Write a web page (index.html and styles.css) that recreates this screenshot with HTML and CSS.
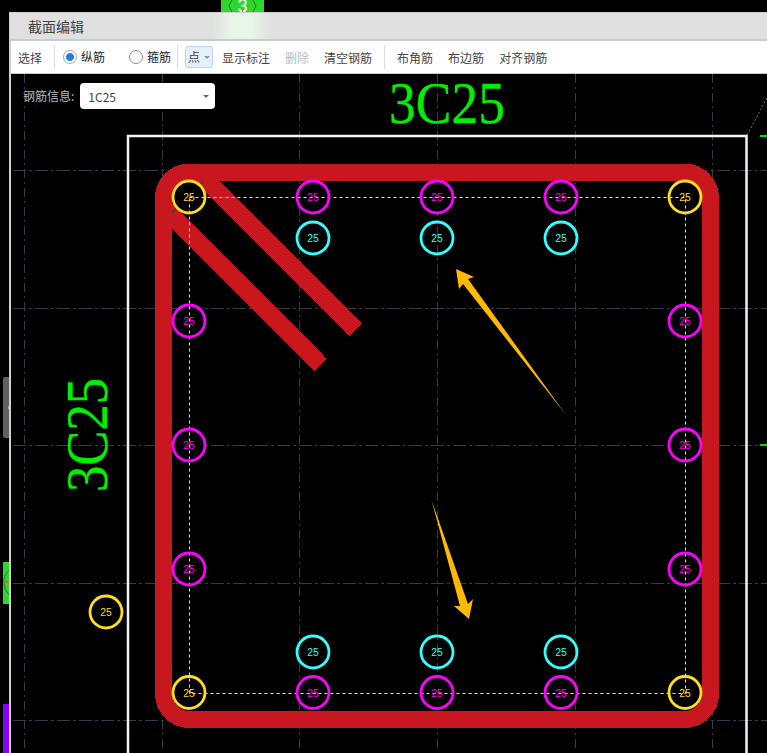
FILE: index.html
```html
<!DOCTYPE html>
<html lang="zh">
<head>
<meta charset="utf-8">
<title>截面编辑</title>
<link rel="stylesheet" href="styles.css">
</head>
<body>
<div class="bg-tab bg-tab-top">
  <svg class="tab-arcs" viewBox="0 0 43 12" width="43" height="12" xmlns="http://www.w3.org/2000/svg">
    <path d="M11 0 L8 6 L11 12 M32 0 L35 6 L32 12"/>
  </svg>
  <span class="tab-num">3</span>
  <span class="tab-mark"></span>
</div>
<div class="bg-tab bg-tab-gray"><span class="gray-dot"></span></div>
<div class="bg-tab bg-tab-green">
  <svg class="tab-arcs" viewBox="0 0 6 42" width="6" height="42" xmlns="http://www.w3.org/2000/svg">
    <path d="M6 8 Q0 14 1 21 Q1 28 6 33"/>
  </svg>
  <span class="green-mark"></span>
</div>
<div class="bg-tab bg-tab-purple"></div>
<main class="window">
  <header class="title-bar">截面编辑</header>
  <nav class="toolbar">
    <span class="tool tool-first">选择</span>
    <span class="sep"></span>
    <label class="radio-item radio-a"><span class="radio radio-on"></span>纵筋</label>
    <label class="radio-item radio-b"><span class="radio"></span>箍筋</label>
    <span class="sep sep-b"></span>
    <span class="drop-btn">点<span class="caret"></span></span>
    <span class="tool">显示标注</span>
    <span class="tool tool-off">删除</span>
    <span class="tool">清空钢筋</span>
    <span class="sep sep-c"></span>
    <span class="tool">布角筋</span>
    <span class="tool">布边筋</span>
    <span class="tool">对齐钢筋</span>
  </nav>
  <section class="canvas">
    <svg class="drawing" viewBox="11 74 756 679" width="756" height="679" xmlns="http://www.w3.org/2000/svg">
      <g class="grid-v">
        <line x1="24.5" y1="74" x2="24.5" y2="749"/>
        <line x1="162.5" y1="74" x2="162.5" y2="749"/>
        <line x1="299.5" y1="74" x2="299.5" y2="749"/>
        <line x1="437.5" y1="74" x2="437.5" y2="749"/>
        <line x1="575.5" y1="74" x2="575.5" y2="749"/>
        <line x1="712.5" y1="74" x2="712.5" y2="749"/>
      </g>
      <g class="grid-h">
        <line x1="13" y1="170.5" x2="767" y2="170.5"/>
        <line x1="13" y1="308.5" x2="767" y2="308.5"/>
        <line x1="13" y1="445.5" x2="767" y2="445.5"/>
        <line x1="13" y1="583.5" x2="767" y2="583.5"/>
        <line x1="13" y1="720.5" x2="767" y2="720.5"/>
      </g>
      <line class="guide" x1="747" y1="135" x2="767" y2="98"/>
      <rect class="column" x="128" y="136" width="618.5" height="640"/>
      <line class="tick" x1="760" y1="136" x2="767" y2="136"/>
      <line class="tick" x1="760" y1="445" x2="767" y2="445"/>
      <text class="label-green" x="389" y="123" textLength="116" lengthAdjust="spacingAndGlyphs">3C25</text>
      <text class="label-green" transform="translate(107 492) rotate(-90)" textLength="114" lengthAdjust="spacingAndGlyphs">3C25</text>
      <g class="bar">
        <rect x="163.5" y="172" width="547" height="547.5" rx="26"/>
        <line x1="197" y1="171" x2="356" y2="330"/>
        <line x1="163" y1="207" x2="321" y2="365"/>
      </g>
      <line class="slit" x1="204" y1="181" x2="172" y2="213"/>
      <g class="disc">
        <circle cx="189" cy="197" r="16"/>
        <circle cx="685" cy="197" r="16"/>
        <circle cx="189" cy="692.5" r="16"/>
        <circle cx="685" cy="692.5" r="16"/>
        <circle cx="313" cy="197" r="16"/>
        <circle cx="437" cy="197" r="16"/>
        <circle cx="561" cy="197" r="16"/>
        <circle cx="313" cy="692.5" r="16"/>
        <circle cx="437" cy="692.5" r="16"/>
        <circle cx="561" cy="692.5" r="16"/>
        <circle cx="189" cy="321" r="16"/>
        <circle cx="189" cy="445" r="16"/>
        <circle cx="189" cy="569" r="16"/>
        <circle cx="685" cy="321" r="16"/>
        <circle cx="685" cy="445" r="16"/>
        <circle cx="685" cy="569" r="16"/>
      </g>
      <rect class="dash-rect" x="189.5" y="197.5" width="496" height="496"/>
      <g class="ring ring-yellow">
        <circle cx="189" cy="197" r="16"/>
        <circle cx="685" cy="197" r="16"/>
        <circle cx="189" cy="692.5" r="16"/>
        <circle cx="685" cy="692.5" r="16"/>
        <circle cx="106" cy="612" r="16"/>
        <text x="189" y="201">25</text>
        <text x="685" y="201">25</text>
        <text x="189" y="696.5">25</text>
        <text x="685" y="696.5">25</text>
        <text x="106" y="616">25</text>
      </g>
      <g class="ring ring-magenta">
        <circle cx="313" cy="197" r="16"/>
        <circle cx="437" cy="197" r="16"/>
        <circle cx="561" cy="197" r="16"/>
        <circle cx="313" cy="692.5" r="16"/>
        <circle cx="437" cy="692.5" r="16"/>
        <circle cx="561" cy="692.5" r="16"/>
        <circle cx="189" cy="321" r="16"/>
        <circle cx="189" cy="445" r="16"/>
        <circle cx="189" cy="569" r="16"/>
        <circle cx="685" cy="321" r="16"/>
        <circle cx="685" cy="445" r="16"/>
        <circle cx="685" cy="569" r="16"/>
        <text x="313" y="201">25</text>
        <text x="437" y="201">25</text>
        <text x="561" y="201">25</text>
        <text x="313" y="696.5">25</text>
        <text x="437" y="696.5">25</text>
        <text x="561" y="696.5">25</text>
        <text x="189" y="325">25</text>
        <text x="189" y="449">25</text>
        <text x="189" y="573">25</text>
        <text x="685" y="325">25</text>
        <text x="685" y="449">25</text>
        <text x="685" y="573">25</text>
      </g>
      <g class="ring ring-cyan">
        <circle cx="313" cy="238" r="16"/>
        <circle cx="437" cy="238" r="16"/>
        <circle cx="561" cy="238" r="16"/>
        <circle cx="313" cy="652" r="16"/>
        <circle cx="437" cy="652" r="16"/>
        <circle cx="561" cy="652" r="16"/>
        <text x="313" y="242">25</text>
        <text x="437" y="242">25</text>
        <text x="561" y="242">25</text>
        <text x="313" y="656">25</text>
        <text x="437" y="656">25</text>
        <text x="561" y="656">25</text>
      </g>
      <polygon class="arrow" points="456,269 474,277 468,279 566,415 463,284 459,289"/>
      <polygon class="arrow" points="431.5,500 468,604 473,599 469,619 454,606 460,606"/>
    </svg>
    <div class="rebar-info">
      <span class="rebar-label">钢筋信息:</span>
      <span class="rebar-select">1C25<span class="caret caret-dark"></span></span>
    </div>
  </section>
</main>
</body>
</html>
```

FILE: styles.css
```css
* { box-sizing: border-box; }
html, body { margin: 0; height: 100%; }
body {
  background: #000;
  overflow: hidden;
  font-family: "Noto Sans CJK SC", "Liberation Sans", sans-serif;
  font-size: 12px;
  position: relative;
}
.bg-tab { position: absolute; overflow: hidden; }
.bg-tab-top {
  left: 221px; top: 0; width: 43px; height: 12px;
  background: #2ed62e;
}
.tab-arcs { position: absolute; left: 0; top: 0; display: block; }
.tab-arcs path { fill: none; stroke: #17803a; stroke-width: 1; }
.tab-num {
  position: absolute;
  left: 15px; top: -3px;
  width: 13px;
  text-align: center;
  font-family: "Liberation Sans", sans-serif;
  font-size: 18px;
  line-height: 18px;
  color: #fff;
}
.tab-mark { position: absolute; left: 21px; top: 10px; width: 1px; height: 2px; background: #e84a2a; }
.bg-tab-gray { left: 3px; top: 377px; width: 6px; height: 61px; background: #616161; border-radius: 2px 0 0 2px; }
.gray-dot { position: absolute; right: 0; top: 29px; width: 1px; height: 3px; background: #aaa; }
.bg-tab-green { left: 3px; top: 562px; width: 6px; height: 42px; background: #2ed62e; }
.green-mark { position: absolute; left: 0; top: 19px; width: 6px; height: 2px; background: #c9711e; }
.bg-tab-purple { left: 3px; top: 704px; width: 6px; height: 49px; background: #8a00ff; }

.window {
  position: absolute;
  left: 9px; top: 12px; right: 0; bottom: 0;
  display: flex;
  flex-direction: column;
  border-left: 2px solid #cfcfcf;
}
.title-bar {
  height: 29px;
  flex: none;
  margin-left: -1px;
  padding: 0 0 0 18px;
  border-top: 1px solid #cfcfcf;
  border-bottom: 2px solid #c8ccd0;
  background: linear-gradient(to right, #e0e0e0 203px, #e8f6e8 222px, #e8f6e8 240px, #e0e0e0 262px);
  font-size: 14px;
  line-height: 26px;
  color: #444;
}
.toolbar {
  height: 33px;
  flex: none;
  display: flex;
  align-items: center;
  background: #fff;
  border-bottom: 1px solid #c9c9c9;
  color: #444;
  line-height: 18px;
}
.tool { padding: 2px 0 0; margin-left: 15px; white-space: nowrap; }
.tool-first { margin-left: 7px; }
.tool-off { color: #bbb; }
.sep { width: 1px; height: 24px; background: #ddd; margin-left: 12px; }
.sep-b { margin-left: 6px; }
.sep-c { margin-left: 12px; }
.sep-c + .tool { margin-left: 12px; }
.radio-item { display: flex; align-items: center; gap: 4px; color: #222; }
.radio-a { margin-left: 8px; }
.radio-b { margin-left: 24px; }
.radio {
  width: 14px; height: 14px;
  border: 1px solid #8f8f8f;
  border-radius: 50%;
  background: #fff;
  display: block;
}
.radio-on {
  border-color: #9aa8ba;
  background: radial-gradient(circle, #2a7ae2 0 3.6px, #fff 4.2px);
}
.drop-btn {
  margin-left: 7px;
  width: 28px; height: 22px;
  border: 1px solid #bcd6f2;
  border-radius: 3px;
  background: #e6f0fb;
  display: flex;
  align-items: center;
  padding: 0 0 0 2px;
  color: #444;
}
.drop-btn + .tool { margin-left: 9px; }
.caret {
  margin-left: 4px;
  width: 0; height: 0;
  border-left: 3px solid transparent;
  border-right: 3px solid transparent;
  border-top: 3px solid #8f98a3;
}
.canvas { position: relative; flex: 1; min-height: 0; background: #000; }
.drawing { display: block; }
.grid-v line, .grid-h line { stroke: #343c48; stroke-width: 1; fill: none; }
.grid-v line { stroke-dasharray: 9 4 2 4; }
.grid-h line { stroke-dasharray: 13 3 3 3; }
.guide { stroke: #777; stroke-width: 1; stroke-dasharray: 2 2; }
.column { fill: none; stroke: #f2f2f2; stroke-width: 2.5; }
.tick { stroke: #00e000; stroke-width: 2; }
.label-green {
  font-family: "Liberation Serif", serif;
  font-size: 60px;
  fill: #00f000;
  stroke: #00f000;
  stroke-width: 0.4;
}
.bar { shape-rendering: crispEdges; }
.bar rect, .bar line { fill: none; stroke: #c8171f; stroke-width: 17; }
.slit { stroke: #000; stroke-width: 1; }
.disc circle { fill: #000; stroke: none; }
.dash-rect { fill: none; stroke: #d8e0ee; stroke-width: 1; stroke-dasharray: 3 3; }
.ring circle { fill: none; stroke-width: 2.8; }
.ring text {
  font-family: "Liberation Sans", sans-serif;
  font-size: 10.4px;
  text-anchor: middle;
}
.ring-yellow circle { stroke: #ffdd1e; }
.ring-yellow text { fill: #ffdd1e; }
.ring-magenta circle { stroke: #ff00ff; }
.ring-magenta text { fill: #ff00ff; }
.ring-cyan circle { stroke: #33ffff; }
.ring-cyan text { fill: #33ffff; }
.arrow { fill: #ffb900; }
.rebar-info {
  position: absolute;
  left: 12px; top: 9px;
  display: flex;
  align-items: center;
  gap: 6px;
}
.rebar-label { color: #b4bcc4; line-height: 26px; }
.rebar-select {
  width: 135px; height: 26px;
  background: #fff;
  border-radius: 4px;
  color: #444;
  padding: 0 8px;
  display: flex;
  align-items: center;
  justify-content: space-between;
}
.caret-dark { border-top-color: #666; margin-left: 0; margin-right: -2px; }
```
